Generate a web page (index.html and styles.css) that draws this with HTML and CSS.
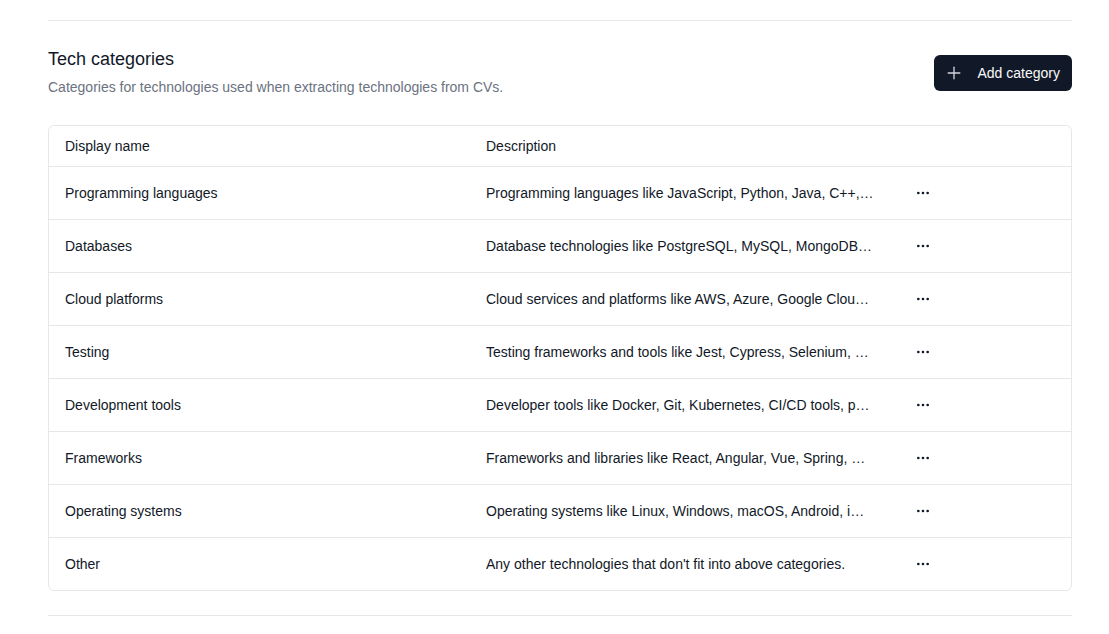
FILE: index.html
```html
<!DOCTYPE html>
<html>
    <head>
        <meta http-equiv="Content-Type" content="text/html; charset=UTF-8">
        <title>Tech categories</title>
        <link rel="stylesheet" href="styles.css">
    </head>
    <body>
        <div class="page">
            <hr class="divider">
            <section class="section">
                <div class="section-head">
                    <div>
                        <h2 class="title">Tech categories</h2>
                        <p class="subtitle">Categories for technologies used when extracting technologies from CVs.</p>
                    </div>
                    <button class="add-btn">
                        <svg width="20" height="20" viewBox="0 0 24 24" fill="none" stroke="currentColor" stroke-width="1.6" stroke-linecap="round"><path d="M5 12h14"/><path d="M12 5v14"/></svg>
                        <span>Add category</span>
                    </button>
                </div>

                <div class="table-wrap">
                    <table class="table">
                        <thead>
                            <tr>
                                <th class="col-name">Display name</th>
                                <th class="col-desc">Description</th>
                                <th class="col-actions"></th>
                            </tr>
                        </thead>
                        <tbody id="rows"></tbody>
                    </table>
                </div>
            </section>
            <hr class="divider">
        </div>

        <script>
            // Category data
            const categories = [
                ['Programming languages', 'Programming languages like JavaScript, Python, Java, C++, Go, Rust and others.'],
                ['Databases', 'Database technologies like PostgreSQL, MySQL, MongoDB, Redis and others.'],
                ['Cloud platforms', 'Cloud services and platforms like AWS, Azure, Google Cloud and others.'],
                ['Testing', 'Testing frameworks and tools like Jest, Cypress, Selenium, JUnit and others.'],
                ['Development tools', 'Developer tools like Docker, Git, Kubernetes, CI/CD tools, package managers.'],
                ['Frameworks', 'Frameworks and libraries like React, Angular, Vue, Spring, Django and others.'],
                ['Operating systems', 'Operating systems like Linux, Windows, macOS, Android, iOS and others.'],
                ['Other', "Any other technologies that don't fit into above categories."]
            ];

            const dots = '<svg width="16" height="16" viewBox="0 0 24 24" fill="none" stroke="currentColor" stroke-width="2" stroke-linecap="round"><circle cx="12" cy="12" r="1"/><circle cx="19" cy="12" r="1"/><circle cx="5" cy="12" r="1"/></svg>';

            const tbody = document.getElementById('rows');
            categories.forEach(([name, desc]) => {
                const tr = document.createElement('tr');
                tr.innerHTML = `<td>${name}</td><td><div class="truncate" title="${desc}">${desc}</div></td><td><button class="menu-btn">${dots}</button></td>`;
                tbody.appendChild(tr);
            });
        </script>
    </body>
</html>
```

FILE: styles.css
```css
body {
    margin: 0;
    font-family: "Liberation Sans", Arial, sans-serif;
    background-color: #ffffff;
    color: #111827;
}
.page {
    padding: 20px 37px 0 48px;
}
.divider {
    border: none;
    border-top: 1px solid #e5e7eb;
    margin: 0;
}
.section {
    padding: 24px 0 24px;
}
.section-head {
    display: flex;
    justify-content: space-between;
    align-items: flex-start;
}
.title {
    font-size: 18px;
    line-height: 28px;
    font-weight: 400;
    margin: 0;
}
.subtitle {
    font-size: 14px;
    line-height: 20px;
    color: #6b7280;
    margin: 4px 0 0;
}
.add-btn {
    display: flex;
    align-items: center;
    gap: 14px;
    height: 36px;
    margin-top: 10px;
    padding: 0 12px 0 10px;
    background-color: #111827;
    color: #f9fafb;
    border: none;
    border-radius: 6px;
    font-family: inherit;
    font-size: 14px;
    cursor: pointer;
}
.add-btn svg {
    color: #d1d5db;
}
.table-wrap {
    margin-top: 28px;
    border: 1px solid #e5e7eb;
    border-radius: 6px;
    overflow: hidden;
}
.table {
    width: 100%;
    border-collapse: collapse;
    table-layout: fixed;
    font-size: 14px;
    line-height: 20px;
}
.table th {
    text-align: left;
    font-weight: 400;
    padding: 10px 16px;
    border-bottom: 1px solid #e5e7eb;
}
.table td {
    padding: 16px;
    border-bottom: 1px solid #e5e7eb;
    vertical-align: middle;
}
.table tbody tr:last-child td {
    border-bottom: none;
}
.col-name {
    width: 389px;
}
.col-desc {
    width: 388px;
}
.truncate {
    white-space: nowrap;
    overflow: hidden;
    text-overflow: ellipsis;
}
.menu-btn {
    display: flex;
    align-items: center;
    justify-content: center;
    width: 33px;
    height: 20px;
    padding: 0;
    border: none;
    background: none;
    color: #111827;
    cursor: pointer;
}
```
